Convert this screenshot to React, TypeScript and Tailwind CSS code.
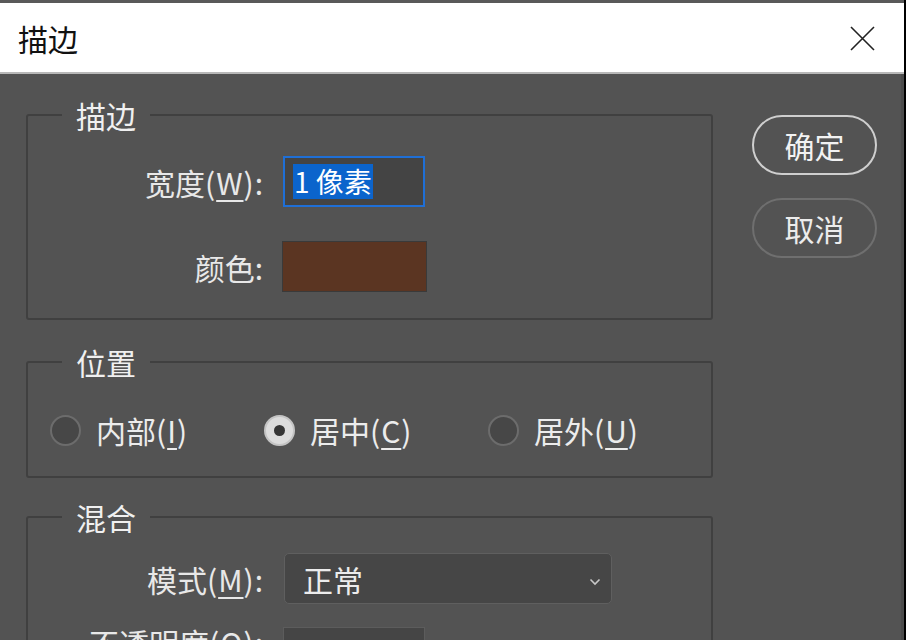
import React from 'react';

const font = "font-['Noto_Sans_CJK_SC','Noto_Sans',sans-serif]";

function Key({ k }: { k: string }) {
    return (
        <span className="tracking-[1px]">
            (<span className="underline underline-offset-[5px] decoration-[1.5px]">{k}</span>)
        </span>
    );
}

function Radio({ checked, label, k, width }: { checked?: boolean; label: string; k: string; width: string }) {
    return (
        <div className={`flex items-center h-[40px] ${width}`}>
            {checked ? (
                <div className="w-[31px] h-[31px] rounded-full bg-[#dcdcdc] border-2 border-[#c4c4c4] flex items-center justify-center">
                    <div className="w-[11px] h-[11px] rounded-full bg-[#353535]" />
                </div>
            ) : (
                <div className="w-[31px] h-[31px] rounded-full bg-[#474747] border-2 border-[#6c6c6c]" />
            )}
            <span className="ml-[15px] text-[30px] leading-[40px] text-[#ececec]">
                {label}
                <Key k={k} />
            </span>
        </div>
    );
}

function Group({ title, children, className }: { title: string; children: React.ReactNode; className?: string }) {
    return (
        <fieldset className={`border-2 border-[#404040] rounded-[3px] ${className ?? ''}`}>
            <legend className="ml-[34px] px-[14px] text-[30px] leading-[40px] text-[#f0f0f0]">{title}</legend>
            {children}
        </fieldset>
    );
}

function Label({ children, className }: { children: React.ReactNode; className?: string }) {
    return <div className={`w-[235px] text-right text-[30px] leading-[40px] text-[#e8e8e8] ${className ?? ''}`}>{children}</div>;
}

export default function App() {
    return (
        <div className={`w-[906px] h-[640px] overflow-hidden bg-[#535353] flex flex-col border-r-2 border-black ${font}`}>
            <div className="h-[74px] shrink-0 bg-white border-t-[3px] border-[#595959] border-b-2 border-b-[#b8b8b8] flex items-center justify-between pl-[18px] pr-[29px]">
                <span className="text-[30px] leading-[40px] text-[#111]">描边</span>
                <svg width="25" height="25" viewBox="0 0 25 25" className="mt-[2px]">
                    <path d="M1 1 L24 24 M24 1 L1 24" stroke="#222" strokeWidth="1.6" fill="none" />
                </svg>
            </div>

            <div className="flex pl-[26px] pt-[21px] border-r-[3px] border-[#4b4b4b] flex-1">
                <div className="w-[687px] shrink-0 flex flex-col">
                    <Group title="描边" className="pb-[26px]">
                        <div className="flex items-center mt-[21px]">
                            <Label>
                                宽度<Key k="W" />:
                            </Label>
                            <div className="ml-[20px] w-[142px] h-[51px] border-2 border-[#1f6fd6] bg-[#444444] flex items-center pl-[8px]">
                                <span className="bg-[#0b64cc] text-white text-[28px] leading-[35px] px-[1px]">1 像素</span>
                            </div>
                        </div>
                        <div className="flex items-center mt-[34px]">
                            <Label>颜色:</Label>
                            <div className="ml-[19px] w-[145px] h-[51px] bg-[#5b3522] border border-[#3a3a3a]" />
                        </div>
                    </Group>

                    <Group title="位置" className="mt-[22px] pb-[26px]">
                        <div className="flex items-center mt-[28px] pl-[22px]">
                            <Radio label="内部" k="I" width="w-[214px]" />
                            <Radio checked label="居中" k="C" width="w-[224px]" />
                            <Radio label="居外" k="U" width="w-[200px]" />
                        </div>
                    </Group>

                    <Group title="混合" className="mt-[19px] pb-[20px]">
                        <div className="flex items-center mt-[16px]">
                            <Label>
                                模式<Key k="M" />:
                            </Label>
                            <div className="ml-[21px] w-[328px] h-[51px] rounded-[5px] bg-[#464646] border border-[#5f5f5f] flex items-center justify-between pl-[18px] pr-[10px]">
                                <span className="text-[30px] leading-[40px] text-[#ececec]">正常</span>
                                <svg width="12" height="8" viewBox="0 0 12 8" className="mt-[6px]">
                                    <path d="M1.5 1.5 L6 6 L10.5 1.5" stroke="#c8c8c8" strokeWidth="1.6" fill="none" />
                                </svg>
                            </div>
                        </div>
                        <div className="flex items-start mt-[23px]">
                            <Label className="-mt-[5px]">
                                不透明度<Key k="O" />:
                            </Label>
                            <div className="ml-[20px] w-[142px] h-[51px] border border-[#5c5c5c] bg-[#454545]" />
                        </div>
                    </Group>
                </div>

                <div className="ml-[39px] mt-[20px] flex flex-col gap-[23px]">
                    <button className="w-[125px] h-[60px] rounded-full border-2 border-[#cfcfcf] text-[30px] leading-[40px] text-[#f2f2f2]">
                        确定
                    </button>
                    <button className="w-[125px] h-[60px] rounded-full border-2 border-[#6f6f6f] text-[30px] leading-[40px] text-[#ececec]">
                        取消
                    </button>
                </div>
            </div>
        </div>
    );
}
